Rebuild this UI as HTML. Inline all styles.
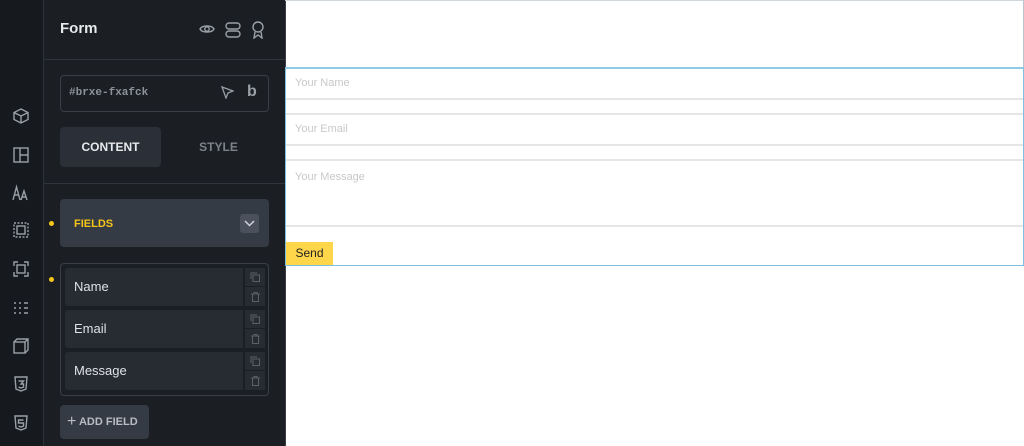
<!DOCTYPE html><html><head><style>
*{margin:0;padding:0;box-sizing:border-box}
body{width:1024px;height:446px;overflow:hidden;background:#fff;font-family:"Liberation Sans",sans-serif;position:relative}
.a{position:absolute}
.ic{position:absolute;left:12px;width:18px;height:18px;fill:none;stroke:#9aa0a8;stroke-width:1.4}
.ab{height:18px;background:#272b32;margin-bottom:1px;display:flex;align-items:center;justify-content:center}
</style></head><body>
<div class="a" style="left:0;top:0;width:44px;height:446px;background:#16191d;border-right:1px solid #2d3138"></div>
<div class="a" style="left:44px;top:0;width:241px;height:446px;background:#1b1e22"></div>
<div class="a" style="left:44px;top:59px;width:241px;height:1px;background:#30343b"></div>
<div class="a" style="left:44px;top:183px;width:241px;height:1px;background:#30343b"></div>
<div class="a" style="left:285px;top:0;width:1px;height:446px;background:#3a3f47"></div>
<div class="a" style="left:60px;top:20px;color:#e8e9eb;font-weight:bold;font-size:15px">Form</div>
<svg class="a" style="left:199px;top:22px" width="16" height="14" viewBox="0 0 16 14" fill="none" stroke="#9aa0a8" stroke-width="1.4"><path d="M1 7C3 3 13 3 15 7C13 11 3 11 1 7Z"/><circle cx="8" cy="7" r="2.2"/></svg>
<svg class="a" style="left:225px;top:22px" width="16" height="16" viewBox="0 0 16 16" fill="none" stroke="#9aa0a8" stroke-width="1.4"><rect x="1" y="1" width="14" height="6" rx="3"/><rect x="1" y="9" width="14" height="6" rx="3"/></svg>
<svg class="a" style="left:251px;top:21px" width="14" height="18" viewBox="0 0 14 18" fill="none" stroke="#9aa0a8" stroke-width="1.4"><circle cx="7" cy="6" r="5"/><path d="M4 11L3 17L7 14L11 17L10 11"/></svg>
<div class="a" style="left:60px;top:75px;width:209px;height:37px;border:1px solid #3a3f47;border-radius:4px"></div>
<div class="a" style="left:69px;top:87px;color:#8d9299;font-family:'Liberation Mono',monospace;font-size:11px;font-weight:bold">#brxe-fxafck</div>
<svg class="a" style="left:221px;top:86px" width="13" height="13" viewBox="0 0 13 13" fill="none" stroke="#9aa0a8" stroke-width="1.3"><path d="M1 1L12 5L7 7L5 12Z"/></svg>
<div class="a" style="left:247px;top:83px;color:#9aa0a8;font-weight:bold;font-size:16px">b</div>
<div class="a" style="left:60px;top:127px;width:101px;height:40px;background:#2b3038;border-radius:4px;color:#e8e9eb;font-weight:bold;font-size:12px;text-align:center;line-height:40px">CONTENT</div>
<div class="a" style="left:168px;top:127px;width:101px;height:40px;color:#7d828a;font-weight:bold;font-size:12px;text-align:center;line-height:40px">STYLE</div>
<div class="a" style="left:49px;top:221px;width:5px;height:5px;border-radius:50%;background:#f5c518"></div>
<div class="a" style="left:60px;top:199px;width:209px;height:48px;background:#353b45;border-radius:4px"></div>
<div class="a" style="left:74px;top:218px;color:#f5c518;font-weight:bold;font-size:11px">FIELDS</div>
<div class="a" style="left:240px;top:214px;width:19px;height:19px;background:#4a515c;border-radius:3px"></div>
<svg class="a" style="left:244px;top:219px" width="11" height="9" viewBox="0 0 11 9" fill="none" stroke="#d0d3d8" stroke-width="1.5"><path d="M1 2L5.5 6.5L10 2"/></svg>
<div class="a" style="left:49px;top:277px;width:5px;height:5px;border-radius:50%;background:#f5c518"></div>
<div class="a" style="left:60px;top:263px;width:209px;height:133px;border:1px solid #3a3f47;border-radius:4px"></div>
<div class="a" style="left:65px;top:268px;width:178px;height:38px;background:#272b32;border-radius:3px 0 0 3px;color:#dfe1e4;font-size:13px;line-height:38px;padding-left:9px">Name</div>
<div class="a" style="left:65px;top:310px;width:178px;height:38px;background:#272b32;border-radius:3px 0 0 3px;color:#dfe1e4;font-size:13px;line-height:38px;padding-left:9px">Email</div>
<div class="a" style="left:65px;top:352px;width:178px;height:38px;background:#272b32;border-radius:3px 0 0 3px;color:#dfe1e4;font-size:13px;line-height:38px;padding-left:9px">Message</div>
<div class="a" style="left:245px;top:268px;width:20px;height:122px">
<div class="ab"><svg width="10" height="10" viewBox="0 0 10 10" fill="none" stroke="#5a6068"><rect x="3" y="3" width="6.5" height="6.5"/><path d="M1 7V1H7"/></svg></div><div class="ab" style="height:19px;margin-bottom:4px"><svg width="9" height="10" viewBox="0 0 9 10" fill="none" stroke="#5a6068"><path d="M0 2H9M3 2V0.5H6V2M1.5 2V9.5H7.5V2"/></svg></div>
<div class="ab"><svg width="10" height="10" viewBox="0 0 10 10" fill="none" stroke="#5a6068"><rect x="3" y="3" width="6.5" height="6.5"/><path d="M1 7V1H7"/></svg></div><div class="ab" style="height:19px;margin-bottom:4px"><svg width="9" height="10" viewBox="0 0 9 10" fill="none" stroke="#5a6068"><path d="M0 2H9M3 2V0.5H6V2M1.5 2V9.5H7.5V2"/></svg></div>
<div class="ab"><svg width="10" height="10" viewBox="0 0 10 10" fill="none" stroke="#5a6068"><rect x="3" y="3" width="6.5" height="6.5"/><path d="M1 7V1H7"/></svg></div><div class="ab" style="height:19px"><svg width="9" height="10" viewBox="0 0 9 10" fill="none" stroke="#5a6068"><path d="M0 2H9M3 2V0.5H6V2M1.5 2V9.5H7.5V2"/></svg></div></div>
<div class="a" style="left:60px;top:405px;width:89px;height:34px;background:#353b45;border-radius:4px;color:#b9bdc3;font-weight:bold;font-size:11px;line-height:34px;padding-left:7px"><span style="font-size:16px;font-weight:normal;vertical-align:-1px">+</span> ADD FIELD</div>
<svg class="ic" style="top:107px" viewBox="0 0 18 18" stroke="#c9a227"><path d="M9 2L16 5.5V12.5L9 16L2 12.5V5.5Z M2 5.5L9 9L16 5.5 M9 9V16"/></svg>
<svg class="ic" style="top:146px" viewBox="0 0 18 18"><rect x="2" y="2" width="14" height="14"/><path d="M8 2V16M8 9H16"/></svg>
<svg class="ic" style="top:184px" viewBox="0 0 18 18"><path d="M1 16L4.5 3L8 16M2.5 11H6.5M9 16L12 7L15 16M10 13H14"/></svg>
<svg class="ic" style="top:221px" viewBox="0 0 18 18" stroke-dasharray="2 1.5"><rect x="2" y="2" width="14" height="14"/><rect x="5" y="5" width="8" height="8" stroke-dasharray="none"/></svg>
<svg class="ic" style="top:260px" viewBox="0 0 18 18"><path d="M2 6V2H6M12 2H16V6M16 12V16H12M6 16H2V12"/><rect x="5" y="5" width="8" height="8"/></svg>
<svg class="ic" style="top:299px" viewBox="0 0 18 18" stroke-width="1.2"><path d="M2 4h2M7 4h2M12 4h4M2 9h2M7 9h2M12 9h4M2 14h2M7 14h2M12 14h4"/></svg>
<svg class="ic" style="top:337px" viewBox="0 0 18 18"><rect x="2" y="5" width="11" height="11"/><path d="M2 5L5 2H16V13L13 16M13 5L16 2"/></svg>
<svg class="ic" style="top:375px" viewBox="0 0 18 18"><path d="M3 2H15L14 14L9 16L4 14Z M6.5 6H11.5L9 9H11.5V12L9 13L6.5 12"/></svg>
<svg class="ic" style="top:414px" viewBox="0 0 18 18"><path d="M3 2H15L14 14L9 16L4 14Z M11.5 6H6.5V9H11.5V12L9 13L6.5 12"/></svg>
<div class="a" style="left:285px;top:0;width:739px;height:1px;background:#cfd6dc"></div>
<div class="a" style="left:1023px;top:0;width:1px;height:265px;background:#b8c6d2"></div>
<div class="a" style="left:285px;top:67px;width:739px;height:199px;border:1px solid #7cc0e0;border-top:2px solid #8fcbe8"></div>
<div class="a" style="left:286px;top:98px;width:737px;height:2px;background:#e6e6e6"></div>
<div class="a" style="left:286px;top:113px;width:737px;height:2px;background:#e6e6e6"></div>
<div class="a" style="left:286px;top:144px;width:737px;height:2px;background:#e6e6e6"></div>
<div class="a" style="left:286px;top:159px;width:737px;height:2px;background:#e6e6e6"></div>
<div class="a" style="left:286px;top:225px;width:737px;height:2px;background:#e6e6e6"></div>
<div class="a" style="left:295px;top:77px;color:#c8c8c8;font-size:11px">Your Name</div>
<div class="a" style="left:295px;top:123px;color:#c8c8c8;font-size:11px">Your Email</div>
<div class="a" style="left:295px;top:171px;color:#c8c8c8;font-size:11px">Your Message</div>
<div class="a" style="left:286px;top:242px;width:47px;height:23px;background:#ffd54a;color:#222;font-size:12px;line-height:23px;text-align:center">Send</div>
</body></html>
